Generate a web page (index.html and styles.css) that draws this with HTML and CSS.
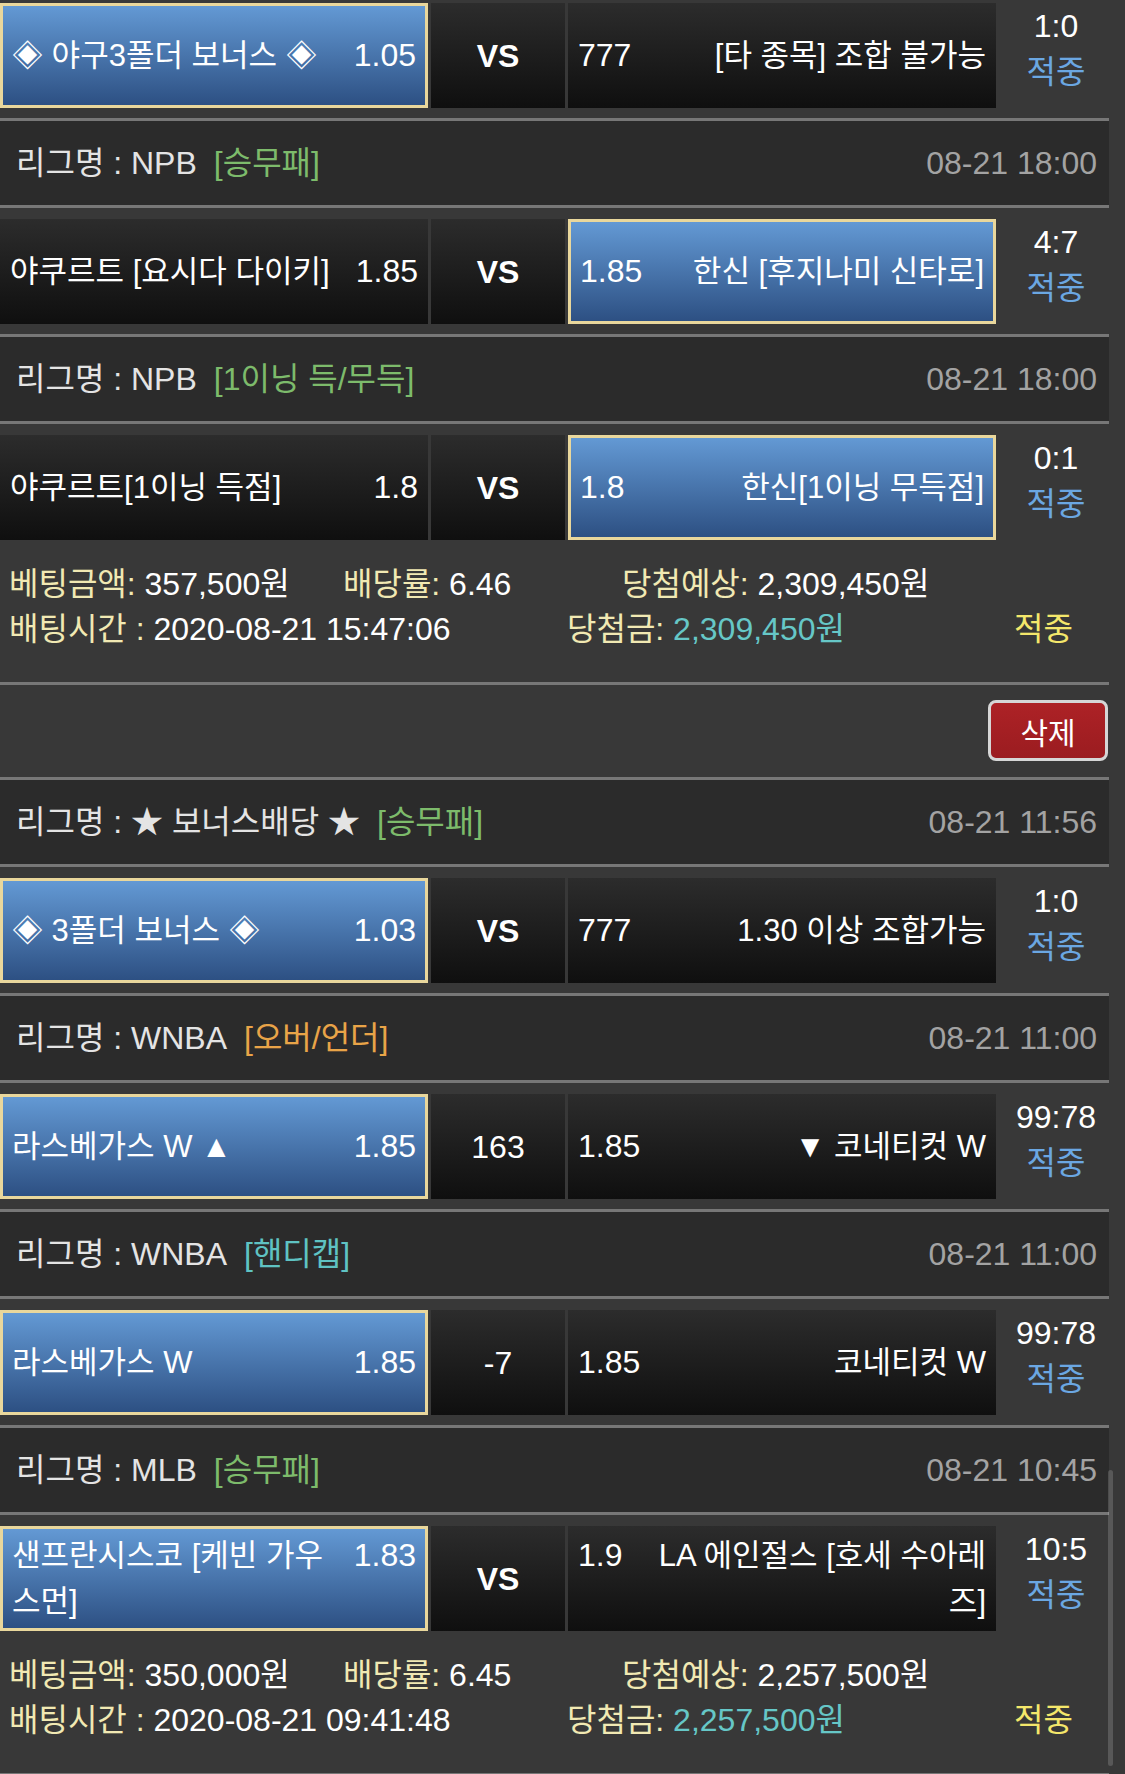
FILE: index.html
```html
<!DOCTYPE html>
<html lang="ko">
<head>
  <meta charset="UTF-8">
  <meta name="viewport" content="width=device-width, initial-scale=1.0">
  <title>베팅내역</title>
<link rel="stylesheet" href="styles.css">
</head>
<body>
  <div class="bet-list">

    <!-- 첫번째 베팅 -->
    <div class="match first">
      <div class="side home picked"><div class="side-in"><span class="name">◈ 야구3폴더 보너스 ◈</span><span class="odds">1.05</span></div></div>
      <div class="mid bold">VS</div>
      <div class="side away"><div class="side-in"><span class="odds">777</span><span class="name">[타 종목] 조합 불가능</span></div></div>
      <div class="score">1:0<span class="hit">적중</span></div>
    </div>

    <div class="league">
      <div>리그명 : NPB<span class="tag green">[승무패]</span></div>
      <div class="date">08-21 18:00</div>
    </div>
    <div class="match">
      <div class="side home"><div class="side-in"><span class="name">야쿠르트 [요시다 다이키]</span><span class="odds">1.85</span></div></div>
      <div class="mid bold">VS</div>
      <div class="side away picked"><div class="side-in"><span class="odds">1.85</span><span class="name">한신 [후지나미 신타로]</span></div></div>
      <div class="score">4:7<span class="hit">적중</span></div>
    </div>

    <div class="league">
      <div>리그명 : NPB<span class="tag green">[1이닝 득/무득]</span></div>
      <div class="date">08-21 18:00</div>
    </div>
    <div class="match">
      <div class="side home"><div class="side-in"><span class="name">야쿠르트[1이닝 득점]</span><span class="odds">1.8</span></div></div>
      <div class="mid bold">VS</div>
      <div class="side away picked"><div class="side-in"><span class="odds">1.8</span><span class="name">한신[1이닝 무득점]</span></div></div>
      <div class="score">0:1<span class="hit">적중</span></div>
    </div>

    <div class="summary">
      <div class="sum-line">
        <span class="w-amount"><span class="lbl">베팅금액:</span> 357,500원</span>
        <span class="w-rate"><span class="lbl">배당률:</span> 6.46</span>
        <span><span class="lbl">당첨예상:</span> 2,309,450원</span>
      </div>
      <div class="sum-line">
        <span class="w-time"><span class="lbl">배팅시간 :</span> 2020-08-21 15:47:06</span>
        <span class="w-win"><span class="lbl">당첨금:</span> <span class="win-money">2,309,450원</span></span>
        <span class="result">적중</span>
      </div>
    </div>

    <div class="del-row">
      <button class="del-button">삭제</button>
    </div>

    <!-- 두번째 베팅 -->
    <div class="league">
      <div>리그명 : ★ 보너스배당 ★<span class="tag green">[승무패]</span></div>
      <div class="date">08-21 11:56</div>
    </div>
    <div class="match">
      <div class="side home picked"><div class="side-in"><span class="name">◈ 3폴더 보너스 ◈</span><span class="odds">1.03</span></div></div>
      <div class="mid bold">VS</div>
      <div class="side away"><div class="side-in"><span class="odds">777</span><span class="name">1.30 이상 조합가능</span></div></div>
      <div class="score">1:0<span class="hit">적중</span></div>
    </div>

    <div class="league">
      <div>리그명 : WNBA<span class="tag orange">[오버/언더]</span></div>
      <div class="date">08-21 11:00</div>
    </div>
    <div class="match">
      <div class="side home picked"><div class="side-in"><span class="name">라스베가스 W ▲</span><span class="odds">1.85</span></div></div>
      <div class="mid">163</div>
      <div class="side away"><div class="side-in"><span class="odds">1.85</span><span class="name">▼ 코네티컷 W</span></div></div>
      <div class="score">99:78<span class="hit">적중</span></div>
    </div>

    <div class="league">
      <div>리그명 : WNBA<span class="tag teal">[핸디캡]</span></div>
      <div class="date">08-21 11:00</div>
    </div>
    <div class="match">
      <div class="side home picked"><div class="side-in"><span class="name">라스베가스 W</span><span class="odds">1.85</span></div></div>
      <div class="mid">-7</div>
      <div class="side away"><div class="side-in"><span class="odds">1.85</span><span class="name">코네티컷 W</span></div></div>
      <div class="score">99:78<span class="hit">적중</span></div>
    </div>

    <div class="league">
      <div>리그명 : MLB<span class="tag green">[승무패]</span></div>
      <div class="date">08-21 10:45</div>
    </div>
    <div class="match">
      <div class="side home picked"><div class="side-in"><span class="name">샌프란시스코 [케빈 가우스먼]</span><span class="odds">1.83</span></div></div>
      <div class="mid bold">VS</div>
      <div class="side away"><div class="side-in"><span class="odds">1.9</span><span class="name">LA 에인절스 [호세 수아레즈]</span></div></div>
      <div class="score">10:5<span class="hit">적중</span></div>
    </div>

    <div class="summary last">
      <div class="sum-line">
        <span class="w-amount"><span class="lbl">베팅금액:</span> 350,000원</span>
        <span class="w-rate"><span class="lbl">배당률:</span> 6.45</span>
        <span><span class="lbl">당첨예상:</span> 2,257,500원</span>
      </div>
      <div class="sum-line">
        <span class="w-time"><span class="lbl">배팅시간 :</span> 2020-08-21 09:41:48</span>
        <span class="w-win"><span class="lbl">당첨금:</span> <span class="win-money">2,257,500원</span></span>
        <span class="result">적중</span>
      </div>
    </div>
  </div>

  <div class="scroll-thumb"></div>
</body>
</html>
```

FILE: styles.css
```css
:root {
  --bg-page: #383838;
  --bg-league: #2b2b2b;
  --line: #777777;
  --gold: #e9d79c;
  --text-main: #ffffff;
  --text-label: #e4e4e4;
  --text-date: #a3a3a3;
  --hit-blue: #6ba7e2;
  --pale-yellow: #f1e9b3;
}

* {
  box-sizing: border-box;
}

body {
  margin: 0;
  position: relative;
  background-color: var(--bg-page);
  color: var(--text-main);
  font-family: 'Liberation Sans', 'Noto Sans CJK KR', sans-serif;
  font-size: 32px;
  line-height: 46px;
}

.bet-list {
  width: 1109px;
}

/* 리그 줄 */
.league {
  height: 90px;
  display: flex;
  align-items: center;
  justify-content: space-between;
  padding: 0 12px 0 16px;
  background-color: var(--bg-league);
  border-top: 3px solid var(--line);
  border-bottom: 3px solid var(--line);
  color: var(--text-label);
}

.tag {
  margin-left: 17px;
}

.tag.green {
  color: #7dbb6b;
}

.tag.orange {
  color: #e9a448;
}

.tag.teal {
  color: #5fc3c3;
}

.date {
  color: var(--text-date);
}

/* 경기 줄 */
.match {
  display: grid;
  grid-template-columns: 428px 134px 428px 1fr;
  column-gap: 3px;
  padding: 11px 0 10px;
}

.match.first {
  padding-top: 3px;
}

.side {
  height: 105px;
  display: flex;
  align-items: center;
  padding: 0 10px;
  background: linear-gradient(to bottom, #2c2c2c, #0f0f0f);
}

.side.picked {
  padding: 0 9px;
  background: linear-gradient(to bottom, #6399d4, #2d5083);
  border: 3px solid var(--gold);
}

.side-in {
  display: flex;
  align-items: baseline;
  width: 100%;
}

.name {
  flex: 1;
  min-width: 0;
  font-size: 31px;
}

.odds {
  flex: none;
}

.home .odds {
  margin-left: 20px;
}

.away .odds {
  margin-right: 8px;
}

.away .name {
  text-align: right;
}

.mid {
  height: 105px;
  display: flex;
  align-items: center;
  justify-content: center;
  background: linear-gradient(to bottom, #2c2c2c, #0f0f0f);
}

.mid.bold {
  font-weight: 700;
}

.score {
  display: flex;
  flex-direction: column;
  align-items: center;
  padding-left: 4px;
}

.hit {
  color: var(--hit-blue);
}

/* 합계 */
.summary {
  padding: 12px 9px 30px;
  line-height: 45px;
}

.summary.last {
  border-bottom: 3px solid var(--line);
}

.sum-line {
  display: flex;
}

.lbl {
  color: var(--pale-yellow);
}

.w-amount {
  width: 334px;
}

.w-rate {
  width: 279px;
}

.w-time {
  width: 558px;
}

.w-win {
  width: 447px;
}

.win-money {
  color: #66c7c7;
}

.result {
  color: #f4e76b;
}

/* 삭제 버튼 */
.del-row {
  display: flex;
  justify-content: flex-end;
  padding: 15px 1px 16px 0;
  border-top: 3px solid var(--line);
}

.del-button {
  width: 120px;
  height: 61px;
  background: linear-gradient(to bottom, #ad2226, #9b1c20);
  border: 3px solid #d6d6d6;
  border-radius: 8px;
  color: #ffffff;
  font-family: inherit;
  font-size: 30px;
  cursor: pointer;
}

.scroll-thumb {
  position: absolute;
  left: 1108px;
  top: 1470px;
  width: 5px;
  height: 296px;
  border-radius: 3px;
  background-color: rgba(255, 255, 255, 0.16);
}
```
